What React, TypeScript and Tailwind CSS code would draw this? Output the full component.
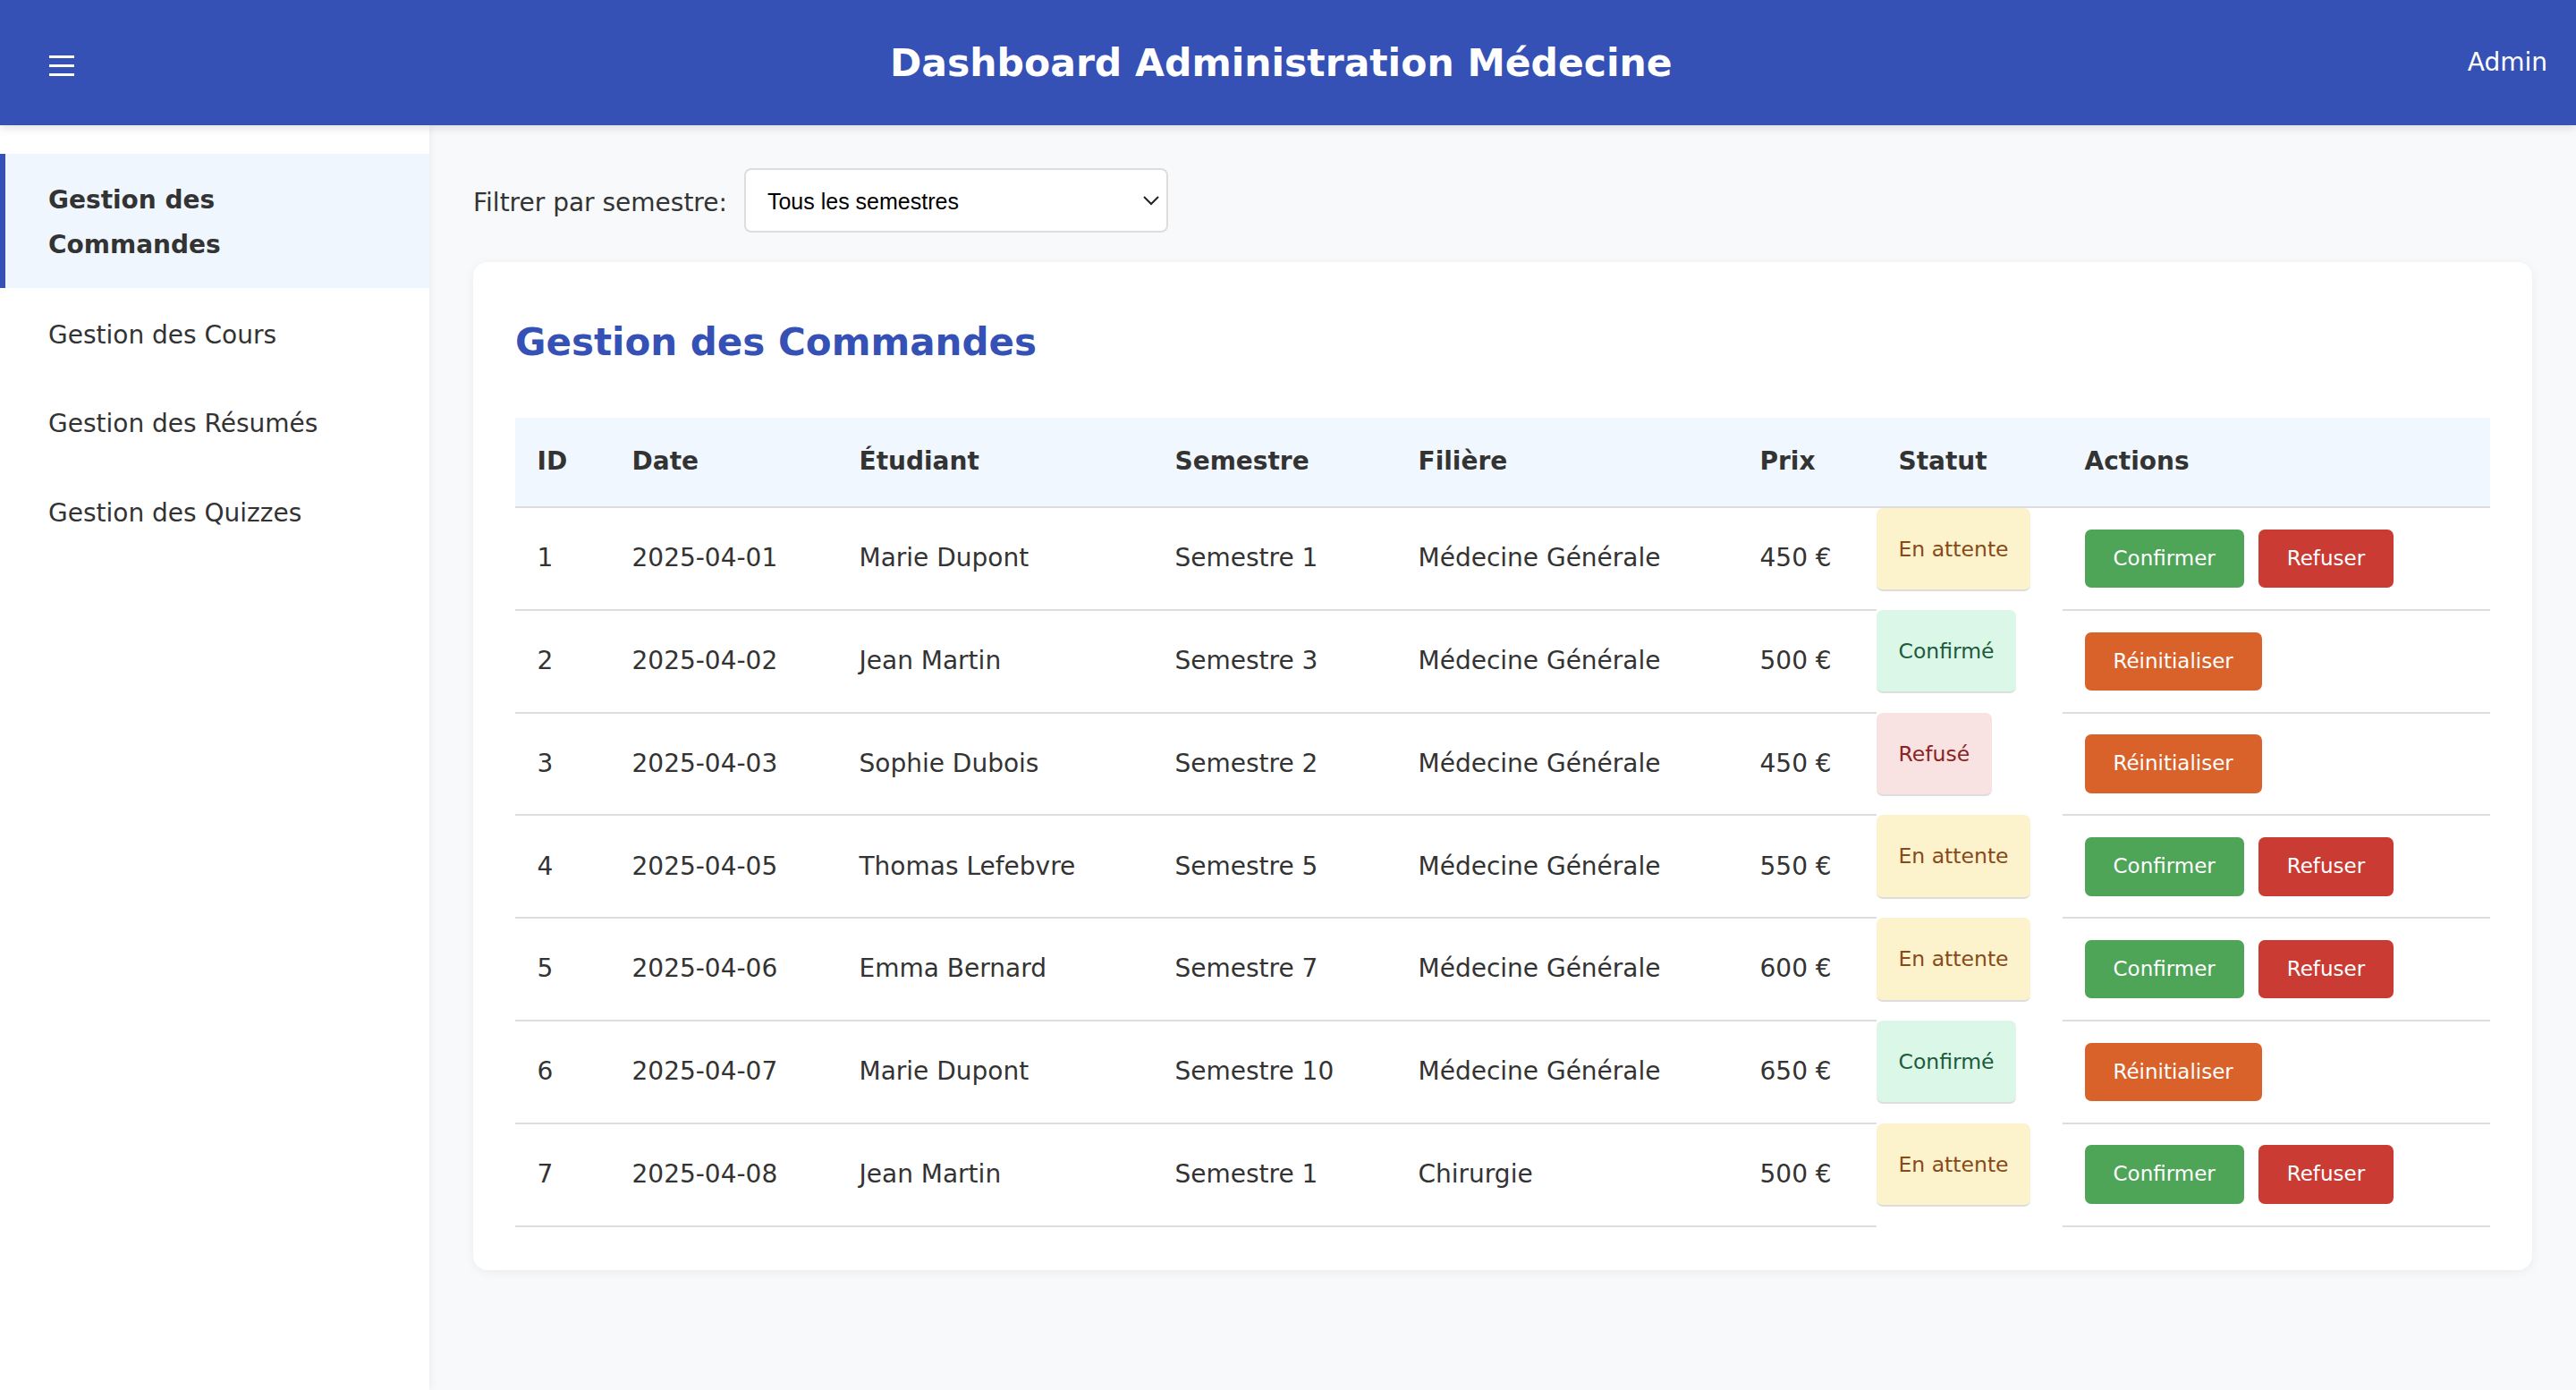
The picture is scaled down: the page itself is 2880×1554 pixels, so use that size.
/* eslint-disable */
import { useState } from "react";

const COMMANDES = [
  { id: 1, date: "2025-04-01", etudiant: "Marie Dupont", semestre: "Semestre 1", filiere: "Médecine Générale", prix: "450 €", statut: "attente" },
  { id: 2, date: "2025-04-02", etudiant: "Jean Martin", semestre: "Semestre 3", filiere: "Médecine Générale", prix: "500 €", statut: "confirme" },
  { id: 3, date: "2025-04-03", etudiant: "Sophie Dubois", semestre: "Semestre 2", filiere: "Médecine Générale", prix: "450 €", statut: "refuse" },
  { id: 4, date: "2025-04-05", etudiant: "Thomas Lefebvre", semestre: "Semestre 5", filiere: "Médecine Générale", prix: "550 €", statut: "attente" },
  { id: 5, date: "2025-04-06", etudiant: "Emma Bernard", semestre: "Semestre 7", filiere: "Médecine Générale", prix: "600 €", statut: "attente" },
  { id: 6, date: "2025-04-07", etudiant: "Marie Dupont", semestre: "Semestre 10", filiere: "Médecine Générale", prix: "650 €", statut: "confirme" },
  { id: 7, date: "2025-04-08", etudiant: "Jean Martin", semestre: "Semestre 1", filiere: "Chirurgie", prix: "500 €", statut: "attente" },
];

const STATUTS: Record<string, { label: string; cls: string }> = {
  attente: { label: "En attente", cls: "bg-[#fcf3cd] text-[#874a1a]" },
  confirme: { label: "Confirmé", cls: "bg-[#dbf7e7] text-[#1d5b3c]" },
  refuse: { label: "Refusé", cls: "bg-[#f8e2e2] text-[#8a2424]" },
};

const MENU = ["Gestion des Commandes", "Gestion des Cours", "Gestion des Résumés", "Gestion des Quizzes"];

const btn = "rounded-[7px] px-[32px] py-[12px] text-[23px] leading-[1.8] text-white";
const th = "border-b-2 border-[#dddddd] px-[24.5px] py-[24.6px] font-bold";

export default function App() {
  const [active, setActive] = useState(0);

  return (
    <div className="flex min-h-[1554px] flex-col bg-[#f8f9fa] font-['DejaVu_Sans',sans-serif] text-[28px] leading-[1.8] text-[#333]">
      {/* top bar */}
      <header className="relative z-10 flex h-[140px] items-center justify-between bg-[#3551b5] px-[32px] text-white shadow-[0_3px_10px_rgba(0,0,0,0.12)]">
        <button className="mt-[7px] flex w-[74px] flex-col items-center gap-[6.5px]">
          <span className="block h-[3.5px] w-[28px] bg-white" />
          <span className="block h-[3.5px] w-[28px] bg-white" />
          <span className="block h-[3.5px] w-[28px] bg-white" />
        </button>
        <h1 className="mt-[2px] text-[42.5px] font-bold">Dashboard Administration Médecine</h1>
        <span>Admin</span>
      </header>

      <div className="flex flex-1">
        {/* sidebar */}
        <aside className="w-[480px] shrink-0 bg-white pt-[32px] shadow-[2px_0_8px_rgba(0,0,0,0.05)]">
          <nav className="flex flex-col gap-[1.2px]">
            {MENU.map((m, i) => (
              <a
                key={m}
                onClick={() => setActive(i)}
                className={
                  "block cursor-pointer border-l-[6px] pt-[27px] pl-[48px] pr-[40px] leading-[50px] " +
                  (i === active ? "border-[#3551b5] bg-[#eff6fd] pb-[23px] font-bold" : "border-transparent pb-[21px]")
                }
              >
                {i === 0 ? (
                  <>
                    Gestion des
                    <br />
                    Commandes
                  </>
                ) : (
                  m
                )}
              </a>
            ))}
          </nav>
        </aside>

        {/* main */}
        <main className="flex-1 px-[49px] pt-[48px] pb-[40px]">
          <div className="mb-[33px] flex items-baseline gap-[19px]">
            <label className="relative top-[2px]">Filtrer par semestre:</label>
            <div className="relative flex h-[72px] w-[474px] items-center rounded-[8px] border-2 border-[#dddddd] bg-white pt-[3px] pl-[24px] font-['Liberation_Sans',sans-serif] text-[25px] text-black">
              Tous les semestres
              <svg className="absolute right-[8px] top-[29px]" width="18" height="11" viewBox="0 0 18 11" fill="none">
                <path d="M1 1l8 8 8-8" stroke="#222" strokeWidth="2" />
              </svg>
            </div>
          </div>

          <section className="rounded-[16px] bg-white px-[47px] pt-[51.5px] pb-[48px] shadow-[0_2px_12px_rgba(0,0,0,0.06)]">
            <h2 className="mb-[46.5px] text-[42px] font-bold text-[#3551b5]">Gestion des Commandes</h2>

            <table className="w-full table-fixed border-collapse text-left">
              <thead>
                <tr className="bg-[#f0f7fe]">
                  <th className={th + " w-[106px]"}>ID</th>
                  <th className={th + " w-[254px]"}>Date</th>
                  <th className={th + " w-[353px]"}>Étudiant</th>
                  <th className={th + " w-[272px]"}>Semestre</th>
                  <th className={th + " w-[382px]"}>Filière</th>
                  <th className={th + " w-[155px]"}>Prix</th>
                  <th className={th + " w-[208px]"}>Statut</th>
                  <th className={th}>Actions</th>
                </tr>
              </thead>
              <tbody>
                {COMMANDES.map((c) => {
                  const s = STATUTS[c.statut];
                  const td = "border-b-2 border-[#dddddd] px-[24.5px] py-[23.7px] align-middle";
                  return (
                    <tr key={c.id}>
                      <td className={td}>{c.id}</td>
                      <td className={td}>{c.date}</td>
                      <td className={td}>{c.etudiant}</td>
                      <td className={td}>{c.semestre}</td>
                      <td className={td}>{c.filiere}</td>
                      <td className={td}>{c.prix}</td>
                      <td className="p-0 align-top">
                        <span className={"inline-block rounded-[7px] border-b-2 border-[#dddddd] px-[24.5px] pt-[25px] pb-[24px] text-[23.5px] leading-[1.8] " + s.cls}>
                          {s.label}
                        </span>
                      </td>
                      <td className={td}>
                        <div className="flex gap-[16px]">
                          {c.statut === "attente" ? (
                            <>
                              <button className={btn + " bg-[#4ea457]"}>Confirmer</button>
                              <button className={btn + " bg-[#c93b33]"}>Refuser</button>
                            </>
                          ) : (
                            <button className={btn + " bg-[#d9622b]"}>Réinitialiser</button>
                          )}
                        </div>
                      </td>
                    </tr>
                  );
                })}
              </tbody>
            </table>
          </section>
        </main>
      </div>
    </div>
  );
}
